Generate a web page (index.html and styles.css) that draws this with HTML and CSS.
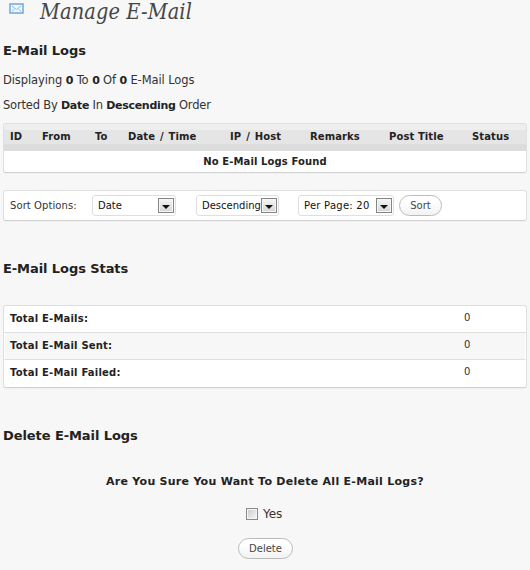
FILE: index.html
```html
<!DOCTYPE html>
<html lang="en">
<head>
<meta charset="utf-8">
<title>Manage E-Mail</title>
<link rel="stylesheet" href="styles.css">
</head>
<body>
<header class="page-head">
  <svg class="mail" width="16" height="12" viewBox="0 0 16 12"><rect x="1" y="1" width="13" height="9" fill="#eef7ff" stroke="#78acdb" stroke-width="1.6"/><path d="M3 3L7.5 6.5L12 3M3 8.3L5.5 6M12 8.3L9.5 6" fill="none" stroke="#8dbde6"/></svg>
  <h1>Manage E-Mail</h1>
</header>
<section class="logs">
  <h2>E-Mail Logs</h2>
  <p class="info disp">Displaying <b>0</b> To <b>0</b> Of <b>0</b> E-Mail Logs</p>
  <p class="info">Sorted By <b>Date</b> In <b>Descending</b> Order</p>
  <div class="box log-table">
    <div class="thead"><span>ID</span><span>From</span><span>To</span><span class="wide">Date / Time</span><span class="wide">IP / Host</span><span>Remarks</span><span>Post Title</span><span>Status</span></div>
    <div class="empty"><span>No E-Mail Logs Found</span></div>
  </div>
  <form class="box sort">
    <span class="sort-label">Sort Options:</span>
    <div class="select s-date"><span>Date</span><i class="arrow"></i></div>
    <div class="select s-order"><span>Descending</span><i class="arrow"></i></div>
    <div class="select s-page"><span>Per Page: 20</span><i class="arrow"></i></div>
    <button type="button" class="btn btn-sort">Sort</button>
  </form>
</section>
<section class="stats">
  <h2>E-Mail Logs Stats</h2>
  <div class="box stat-table">
    <div class="row"><b>Total E-Mails:</b><span>0</span></div>
    <div class="row alt"><b>Total E-Mail Sent:</b><span>0</span></div>
    <div class="row"><b>Total E-Mail Failed:</b><span>0</span></div>
  </div>
</section>
<section class="delete">
  <h2>Delete E-Mail Logs</h2>
  <p class="question">Are You Sure You Want To Delete All E-Mail Logs?</p>
  <label class="yes"><i class="check"></i><span>Yes</span></label>
  <button type="button" class="btn btn-delete">Delete</button>
</section>
</body>
</html>
```
FILE: styles.css
```css
* { box-sizing: border-box; }
body { margin: 0; width: 530px; height: 570px; overflow: hidden; background: #f7f7f7; color: #333; font: 10px/14px "DejaVu Sans", sans-serif; padding: 0 3px; }
h1, h2, p { margin: 0; white-space: nowrap; }
b { color: #222; }
.page-head { display: flex; height: 41px; }
.mail { margin: 3px 14px 0 6px; flex: none; }
h1 { font: italic 21.5px/24px "DejaVu Serif Condensed", "DejaVu Serif", serif; font-stretch: condensed; color: #464646; margin-left: 1px; letter-spacing: 0.15px; }
h2 { font-size: 13px; line-height: 20px; height: 20px; color: #222; letter-spacing: -0.08px; }
.info { font-size: 11.5px; line-height: 16px; height: 16px; letter-spacing: -0.2px; }
.info b { font-size: 11px; letter-spacing: -0.3px; }
.info.disp { letter-spacing: -0.1px; }
h2 + .info { margin-top: 11px; }
.info + .info { margin-top: 9px; }
.box { border: 1px solid #dfdfdf; border-bottom-color: #d2d2d2; border-radius: 3px; background: #fff; box-shadow: 0 1px 0 #efefef; overflow: hidden; }
.log-table { margin-top: 10px; height: 50px; }
.thead { display: grid; grid-template-columns: 32px 53px 33px 102px 80px 79px 83px 1fr; padding: 0 0 0 6px; height: 27px; line-height: 25px; font-weight: bold; color: #222; white-space: nowrap; letter-spacing: 0.1px; background: linear-gradient(#eee 0 6px, #e5e5e5 6px 20px, #dcdcdc 20px); }
.wide { word-spacing: 1.3px; }
.empty { text-align: center; font-weight: bold; color: #222; line-height: 22px; letter-spacing: 0.12px; }
.sort { margin-top: 17px; height: 31px; display: flex; align-items: flex-start; padding: 4px 0 0 6px; }
.sort-label { width: 82px; line-height: 21px; white-space: nowrap; letter-spacing: 0.08px; }
.select { height: 21px; display: flex; border: 1px solid #dfdfdf; border-radius: 3px; background: #fff; color: #111; line-height: 19px; padding-left: 5px; position: relative; white-space: nowrap; }
.s-date { width: 84px; margin-right: 20px; }
.s-order { width: 83px; margin-right: 19px; }
.s-page { width: 96px; margin-right: 5px; letter-spacing: 0.25px; }
.arrow { position: absolute; right: 1px; top: 2px; width: 16px; height: 15px; border: 1px solid #858585; background: linear-gradient(#f6f6f6, #d5d5d5); box-shadow: inset 0 0 0 1px #f7f7f7; }
.arrow::after { content: ""; position: absolute; left: 3px; top: 6px; border: 4px solid transparent; border-top: 4px solid #111; border-bottom: 0; }
.btn { border: 1px solid #bbb; border-radius: 11px; background: linear-gradient(#fff 30%, #f2f2f2); color: #464646; font: 10px/18px "DejaVu Sans", sans-serif; height: 21px; padding: 0; display: block; }
.btn-sort { width: 43px; }
.stats { margin-top: 38px; }
.stat-table { margin-top: 26px; height: 83px; }
.row { display: grid; grid-template-columns: 460px 1fr; height: 27px; line-height: 26px; padding-left: 6px; border-bottom: 1px solid #dfdfdf; }
.row b { letter-spacing: 0.2px; }
.row > span { line-height: 23px; margin-left: -6px; }
.row:last-child { border-bottom: 0; }
.alt { background: #f7f7f7; border-left: 1px solid #fff; border-right: 1px solid #fff; padding-left: 5px; }
.delete { margin-top: 38px; }
.question { font-size: 11px; font-weight: bold; color: #222; line-height: 18px; height: 16px; letter-spacing: 0.27px; text-align: center; margin-top: 27px; }
.yes { display: flex; margin: 17px 0 0 243px; height: 17px; font-size: 12px; line-height: 16px; }
.check { width: 12px; height: 12px; margin: 2px 5px 0 0; border: 1px solid #8b8b8b; background: linear-gradient(135deg, #c9c9c9, #fafafa); box-shadow: inset 0 0 0 1px #f5f5f5; }
.btn-delete { width: 55px; margin: 15px 0 0 235px; }
```
